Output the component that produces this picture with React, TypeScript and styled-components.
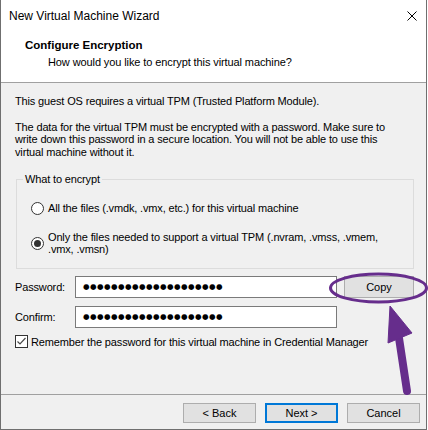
import React from 'react';
import styled, { createGlobalStyle } from 'styled-components';

const GlobalStyle = createGlobalStyle`
  html, body {
    margin: 0;
    padding: 0;
    background: #ffffff;
  }
  body {
    font-family: 'Liberation Sans', Arial, sans-serif;
  }
  * {
    box-sizing: border-box;
  }
`;

const PASSWORD_LENGTH = 20;

const App = () => {
  const [choice, setChoice] = React.useState<'all' | 'tpm'>('tpm');
  const [remember, setRemember] = React.useState(true);

  const dots = Array.from({ length: PASSWORD_LENGTH }, (_, i) => <Dot key={i}>●</Dot>);

  return (
    <>
      <GlobalStyle />
      <Window>
        <TitleBar>
          <TitleText>New Virtual Machine Wizard</TitleText>
          <CloseIcon width="10" height="10" viewBox="0 0 10 10">
            <path d="M0.5 0.5 L9.5 9.5 M9.5 0.5 L0.5 9.5" stroke="#000" strokeWidth="1" />
          </CloseIcon>
        </TitleBar>

        <Header>
          <HeaderTitle>Configure Encryption</HeaderTitle>
          <HeaderSub>How would you like to encrypt this virtual machine?</HeaderSub>
        </Header>

        <Body>
          <Para>This guest OS requires a virtual TPM (Trusted Platform Module).</Para>
          <Para $gap={13}>
            The data for the virtual TPM must be encrypted with a password. Make sure to
            <br />
            write down this password in a secure location. You will not be able to use this
            <br />
            virtual machine without it.
          </Para>

          <Group>
            <Legend>What to encrypt</Legend>
            <RadioRow $gap={16} onClick={() => setChoice('all')}>
              <Radio $checked={choice === 'all'} />
              <RadioLabel>All the files (.vmdk, .vmx, etc.) for this virtual machine</RadioLabel>
            </RadioRow>
            <RadioRow $gap={17} onClick={() => setChoice('tpm')}>
              <Radio $checked={choice === 'tpm'} />
              <RadioLabel>
                Only the files needed to support a virtual TPM (.nvram, .vmss, .vmem,
                <br />
                .vmx, .vmsn)
              </RadioLabel>
            </RadioRow>
          </Group>

          <FieldRow $gap={7}>
            <FieldLabel>Password:</FieldLabel>
            <TextBox>{dots}</TextBox>
            <Button $width={70} $height={22} $gap={7}>Copy</Button>
          </FieldRow>
          <FieldRow $gap={8}>
            <FieldLabel>Confirm:</FieldLabel>
            <TextBox>{dots}</TextBox>
          </FieldRow>

          <CheckRow onClick={() => setRemember((r) => !r)}>
            <CheckBox>
              {remember && (
                <svg width="11" height="11" viewBox="0 0 11 11">
                  <polyline points="1.5,5.5 4,8 9.5,2" fill="none" stroke="#4a4a4a" strokeWidth="1.2" />
                </svg>
              )}
            </CheckBox>
            <span>Remember the password for this virtual machine in Credential Manager</span>
          </CheckRow>
        </Body>

        <Footer>
          <Button $width={73} $height={20}>&lt; Back</Button>
          <Button $width={73} $height={20} $primary>Next &gt;</Button>
          <Button $width={73} $height={20}>Cancel</Button>
        </Footer>

        <Annotation width="428" height="430" viewBox="0 0 428 430">
          <ellipse cx="378.5" cy="288" rx="48" ry="14" fill="none" stroke="#662d8c" strokeWidth="3" />
          <line x1="399" y1="338" x2="407" y2="391" stroke="#662d8c" strokeWidth="8" strokeLinecap="round" />
          <polygon points="390,306 388,343 412,333" fill="#662d8c" stroke="#662d8c" strokeWidth="1" strokeLinejoin="round" />
        </Annotation>
      </Window>
    </>
  );
};

const Window = styled.div`
  position: relative;
  width: 427px;
  height: 430px;
  display: flex;
  flex-direction: column;
  background: #f0f0f0;
  border: 1px solid #6f6f6f;
  border-top: none;
  color: #000;
  font-size: 11px;
  letter-spacing: -0.15px;
`;

const TitleBar = styled.div`
  height: 31px;
  flex-shrink: 0;
  display: flex;
  align-items: center;
  justify-content: space-between;
  padding: 0 9px 0 8px;
  background: #ffffff;
`;

const TitleText = styled.span`
  font-size: 12px;
  letter-spacing: 0;
`;

const CloseIcon = styled.svg`
  display: block;
`;

const Header = styled.div`
  flex-shrink: 0;
  background: #ffffff;
  border-bottom: 1px solid #a0a0a0;
  padding: 7px 0 13px 24px;
`;

const HeaderTitle = styled.div`
  font-weight: bold;
  font-size: 11.5px;
  line-height: 14px;
  letter-spacing: 0;
`;

const HeaderSub = styled.div`
  margin: 3px 0 0 23px;
  line-height: 14px;
  letter-spacing: -0.1px;
`;

const Body = styled.div`
  flex: 1;
  display: flex;
  flex-direction: column;
  padding: 12px 11px 0 14px;
`;

const Para = styled.p<{ $gap?: number }>`
  margin: ${(p) => p.$gap ?? 0}px 0 0;
  line-height: 12.5px;
  white-space: nowrap;
`;

const Group = styled.fieldset`
  margin: 14px 1px 0;
  padding: 0 0 13px 6px;
  border: 1px solid #dcdcdc;
  min-width: 0;
`;

const Legend = styled.legend`
  padding: 0 2px;
  line-height: 14px;
`;

const RadioRow = styled.div<{ $gap: number }>`
  display: flex;
  align-items: center;
  gap: 4px;
  margin: ${(p) => p.$gap}px 0 0 8px;
  cursor: default;
`;

const Radio = styled.span<{ $checked: boolean }>`
  width: 13px;
  height: 13px;
  flex-shrink: 0;
  border: 1px solid #333333;
  border-radius: 50%;
  background: #ffffff;
  display: flex;
  align-items: center;
  justify-content: center;

  &::after {
    content: '';
    width: 7px;
    height: 7px;
    border-radius: 50%;
    background: #333333;
    display: ${(p) => (p.$checked ? 'block' : 'none')};
  }
`;

const RadioLabel = styled.span`
  line-height: 11.5px;
`;

const FieldRow = styled.div<{ $gap: number }>`
  display: flex;
  align-items: center;
  margin-top: ${(p) => p.$gap}px;
`;

const FieldLabel = styled.span`
  width: 60px;
  flex-shrink: 0;
`;

const TextBox = styled.div`
  width: 262px;
  height: 22px;
  flex-shrink: 0;
  display: flex;
  align-items: center;
  padding-left: 7px;
  background: #ffffff;
  border: 1px solid #7a7a7a;
`;

const Dot = styled.span`
  width: 7px;
  font-family: 'DejaVu Sans', sans-serif;
  font-size: 7.5px;
  letter-spacing: 0;
  line-height: 1;
`;

const Button = styled.button<{ $width: number; $height: number; $gap?: number; $primary?: boolean }>`
  width: ${(p) => p.$width}px;
  height: ${(p) => p.$height}px;
  margin-left: ${(p) => p.$gap ?? 0}px;
  flex-shrink: 0;
  padding: 0;
  background: #e1e1e1;
  border: ${(p) => (p.$primary ? '2px solid #0078d7' : '1px solid #adadad')};
  font-family: inherit;
  font-size: 11px;
  letter-spacing: 0;
  color: #000;
  cursor: default;
`;

const CheckRow = styled.div`
  display: flex;
  align-items: center;
  gap: 3px;
  margin-top: 7px;
  cursor: default;
`;

const CheckBox = styled.span`
  width: 13px;
  height: 13px;
  flex-shrink: 0;
  border: 1px solid #333333;
  background: #ffffff;
  display: flex;
  align-items: center;
  justify-content: center;
`;

const Footer = styled.div`
  height: 35px;
  flex-shrink: 0;
  display: flex;
  justify-content: flex-end;
  gap: 9px;
  padding: 8px 6px 0 0;
  border-top: 1px solid #a0a0a0;
`;

const Annotation = styled.svg`
  position: absolute;
  top: 0;
  left: -1px;
  pointer-events: none;
`;

export default App;
